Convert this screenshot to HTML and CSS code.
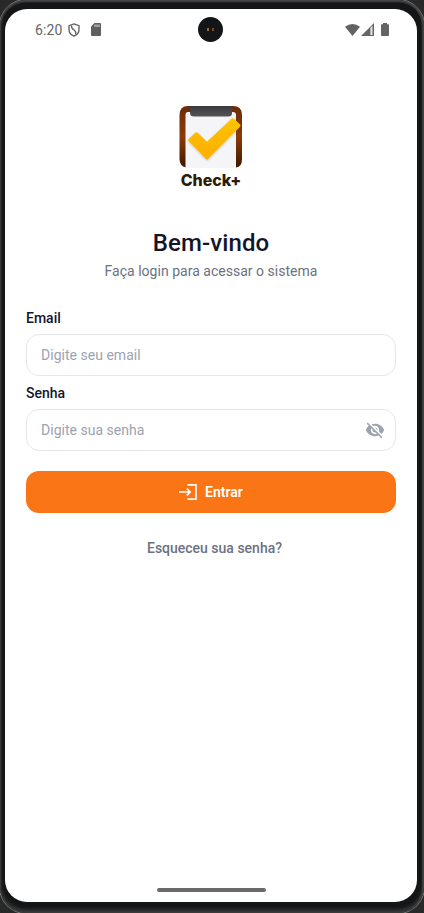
FILE: index.html
```
<!DOCTYPE html>
<html lang="pt-BR">
<head>
<meta charset="utf-8">
<title>Check+</title>
<link rel="stylesheet" href="styles.css">
</head>
<body>
<div class="device">
  <div class="screen">
    <header class="status">
      <span class="time">6:20</span>
      <svg class="shield" width="12" height="14" viewBox="0 0 12 14" fill="none" stroke="#666" stroke-width="1.4"><path d="M6 .9 11 2.700V6.500C11 9.500 9 12 6 13 3 12 1 9.500 1 6.500V2.700Z"/><path d="M3.500 2.300C3 5.500 5 6 6.500 7.200 8 8.400 8 9.500 7.600 11.500"/></svg>
      <svg class="sd" width="10" height="13" viewBox="0 0 10 13"><path fill="#5f5f5f" d="M3.500 0H9Q10 0 10 1V12Q10 13 9 13H1Q0 13 0 12V3.500Z"/><path stroke="#ddd" stroke-width="1" d="M4 1.500V4M6 1.500V4M8 1.500V4"/></svg>
      <span class="camera"><i></i><i></i></span>
      <svg class="wifi" width="15" height="12" viewBox="0 0 15 12"><path fill="#636363" d="M0 2.700Q7.500-2.700 15 2.700L7.500 12Z"/></svg>
      <svg class="signal" width="13" height="13" viewBox="0 0 13 13"><path fill="#666" d="M0 13 13 0V13Z"/><path fill="#e4e4e4" d="M9.400 4.800 11.500 2.700V12H9.400Z"/></svg>
      <svg class="battery" width="8" height="13" viewBox="0 0 8 13"><path fill="#636363" d="M2 0H6V1.300H7.200Q8 1.300 8 2.100V12.200Q8 13 7.200 13H.8Q0 13 0 12.200V2.100Q0 1.300.8 1.300H2Z"/></svg>
    </header>
    <main class="login">
      <div class="logo">
        <svg width="64" height="63" viewBox="0 0 64 63">
          <defs>
            <linearGradient id="wood" x2="0" y2="1"><stop stop-color="#6b2b06"/><stop offset=".5" stop-color="#8b3b08"/><stop offset="1" stop-color="#3e1803"/></linearGradient>
            <linearGradient id="tick" x2="0" y2="1"><stop stop-color="#ffc400"/><stop offset="1" stop-color="#faae00"/></linearGradient>
            <linearGradient id="clip" x2="0" y2="1"><stop stop-color="#3a3a3c"/><stop offset="1" stop-color="#555558"/></linearGradient>
            <filter id="shade" x="-20%" y="-20%" width="140%" height="140%"><feDropShadow dx="0" dy="1" stdDeviation="1" flood-opacity=".2"/></filter>
          </defs>
          <path fill="url(#wood)" d="M9 1H54Q63 1 63 10V54Q63 62 57 62.500H7Q0.500 61 .5 54V10Q.5 1 9 1Z"/>
          <path fill="#f5f5f8" d="M9 7H54Q57 7 57 10V63H6.500V10Q6.500 7 9 7Z"/>
          <path fill="url(#clip)" d="M11 1H53V8Q53 11.500 49.500 11.500H15Q11 11.500 11 8Z"/>
          <path fill="url(#tick)" filter="url(#shade)" d="M9.500 34 16 28Q17.500 26.700 19 28L28 36.700 52.500 13.800Q54 12.500 55.500 14L61 19.500Q62 20.500 61 21.800L29 54Q28 55 27 54L9.500 36Q8.500 35 9.500 34Z"/>
        </svg>
        <span class="brand">Check+</span>
      </div>
      <h1>Bem-vindo</h1>
      <p class="subtitle">Faça login para acessar o sistema</p>
      <form>
        <label for="email">Email</label>
        <div class="field"><input id="email" type="text" placeholder="Digite seu email"></div>
        <label for="senha">Senha</label>
        <div class="field"><input id="senha" type="password" placeholder="Digite sua senha">
          <svg class="eye" width="20" height="20" viewBox="0 0 24 24" fill="#9ca3af"><path d="M12 7c2.760 0 5 2.240 5 5 0 .65-.13 1.260-.36 1.830l2.920 2.920c1.510-1.260 2.700-2.890 3.430-4.750-1.730-4.390-6-7.500-11-7.500-1.400 0-2.740.25-3.980.7l2.160 2.160C10.740 7.130 11.350 7 12 7zM2 4.270l2.280 2.280.46.46C3.080 8.300 1.780 10.020 1 12c1.730 4.390 6 7.500 11 7.500 1.550 0 3.030-.3 4.380-.84l.42.42L19.730 22 21 20.730 3.270 3 2 4.270zM7.530 9.800l1.550 1.550c-.05.21-.08.43-.08.65 0 1.660 1.340 3 3 3 .22 0 .44-.03.65-.08l1.550 1.550c-.67.33-1.410.53-2.200.53-2.760 0-5-2.240-5-5 0-.79.2-1.530.53-2.200zm4.310-.78l3.150 3.150.02-.16c0-1.660-1.340-3-3-3l-.17.01z"/></svg>
        </div>
        <button type="button" class="submit">
          <svg width="18" height="16" viewBox="0 0 18 16" fill="none" stroke="#fff" stroke-width="1.600"><path d="M8.500 .9H17V15.100H8.500M0 8H11M7.800 4.600 11.200 8 7.800 11.400"/></svg>
          <span>Entrar</span>
        </button>
      </form>
      <a class="forgot">Esqueceu sua senha?</a>
    </main>
    <div class="home"></div>
  </div>
</div>
</body>
</html>
```
FILE: styles.css
```
* { box-sizing: border-box; }
body { margin: 0; background: #292929; font-family: Roboto, sans-serif; overflow: hidden; }
.device {
  width: 424px; height: 913px; padding: 9px 7px 11px 5px;
  background: #141516; border-radius: 26px;
  box-shadow: inset 0 2px 2px #484848, inset -2px 0 1px #3c403e, inset 0 -3px 4px #414141, inset 1px 0 1px #333, 0 0 0 1px #777;
}
.screen { height: 893px; background: #fff; border-radius: 22px; display: flex; flex-direction: column; overflow: hidden; }
.status { height: 41px; display: flex; align-items: center; padding: 0 28px 0 30px; color: #666; }
.time { width: 33px; font-size: 14px; letter-spacing: .1px; }
.sd { margin-left: 11px; }
.camera { width: 25px; height: 25px; border-radius: 50%; background: #141517; margin-left: 97px; display: flex; align-items: center; justify-content: center; gap: 3px; }
.camera i { width: 2px; height: 3px; background: #8d7040; }
.camera i + i { background: #84432c; }
.wifi { margin-left: auto; }
.signal { margin-left: 1px; }
.battery { margin-left: 7px; }
.login { flex: 1; padding: 55px 21px 0; display: flex; flex-direction: column; align-items: center; }
.logo { height: 90px; display: flex; flex-direction: column; align-items: center; }
.logo svg { flex: none; }
.brand { font: 800 16px/22px Inter, sans-serif; letter-spacing: 0; color: #2d1b08; margin-top: 1px; }
h1 { margin: 32px 0 0; font-size: 24px; line-height: 32px; font-weight: 500; letter-spacing: .1px; color: #15152a; }
.subtitle { margin: 2px 0 0; font-size: 14px; line-height: 20px; letter-spacing: .02px; color: #6b7280; }
form { width: 370px; margin-top: 28px; display: flex; flex-direction: column; }
label { height: 25px; line-height: 18px; font-size: 14px; font-weight: 500; color: #15152a; }
.field { height: 42px; margin-bottom: 8px; display: flex; align-items: center; border: 1px solid #e5e7eb; border-radius: 13px; padding: 0 10px 0 14px; }
input { flex: 1; min-width: 0; padding: 0; border: 0; outline: 0; background: none; font: 14px Roboto, sans-serif; letter-spacing: .02px; }
input::placeholder { color: #9ca3af; opacity: 1; }
.submit { height: 42px; margin-top: 12px; padding: 0; border: 0; border-radius: 13px; background: #f97516; color: #fff; display: flex; align-items: center; justify-content: center; gap: 8px; font: 600 14px Roboto, sans-serif; }
.forgot { margin: 25px 0 0 7px; font-size: 14px; line-height: 20px; font-weight: 500; color: #6b7280; }
.home { width: 109px; height: 4px; margin: 0 auto 10px; border-radius: 2px; background: #6a6a6a; }
```
